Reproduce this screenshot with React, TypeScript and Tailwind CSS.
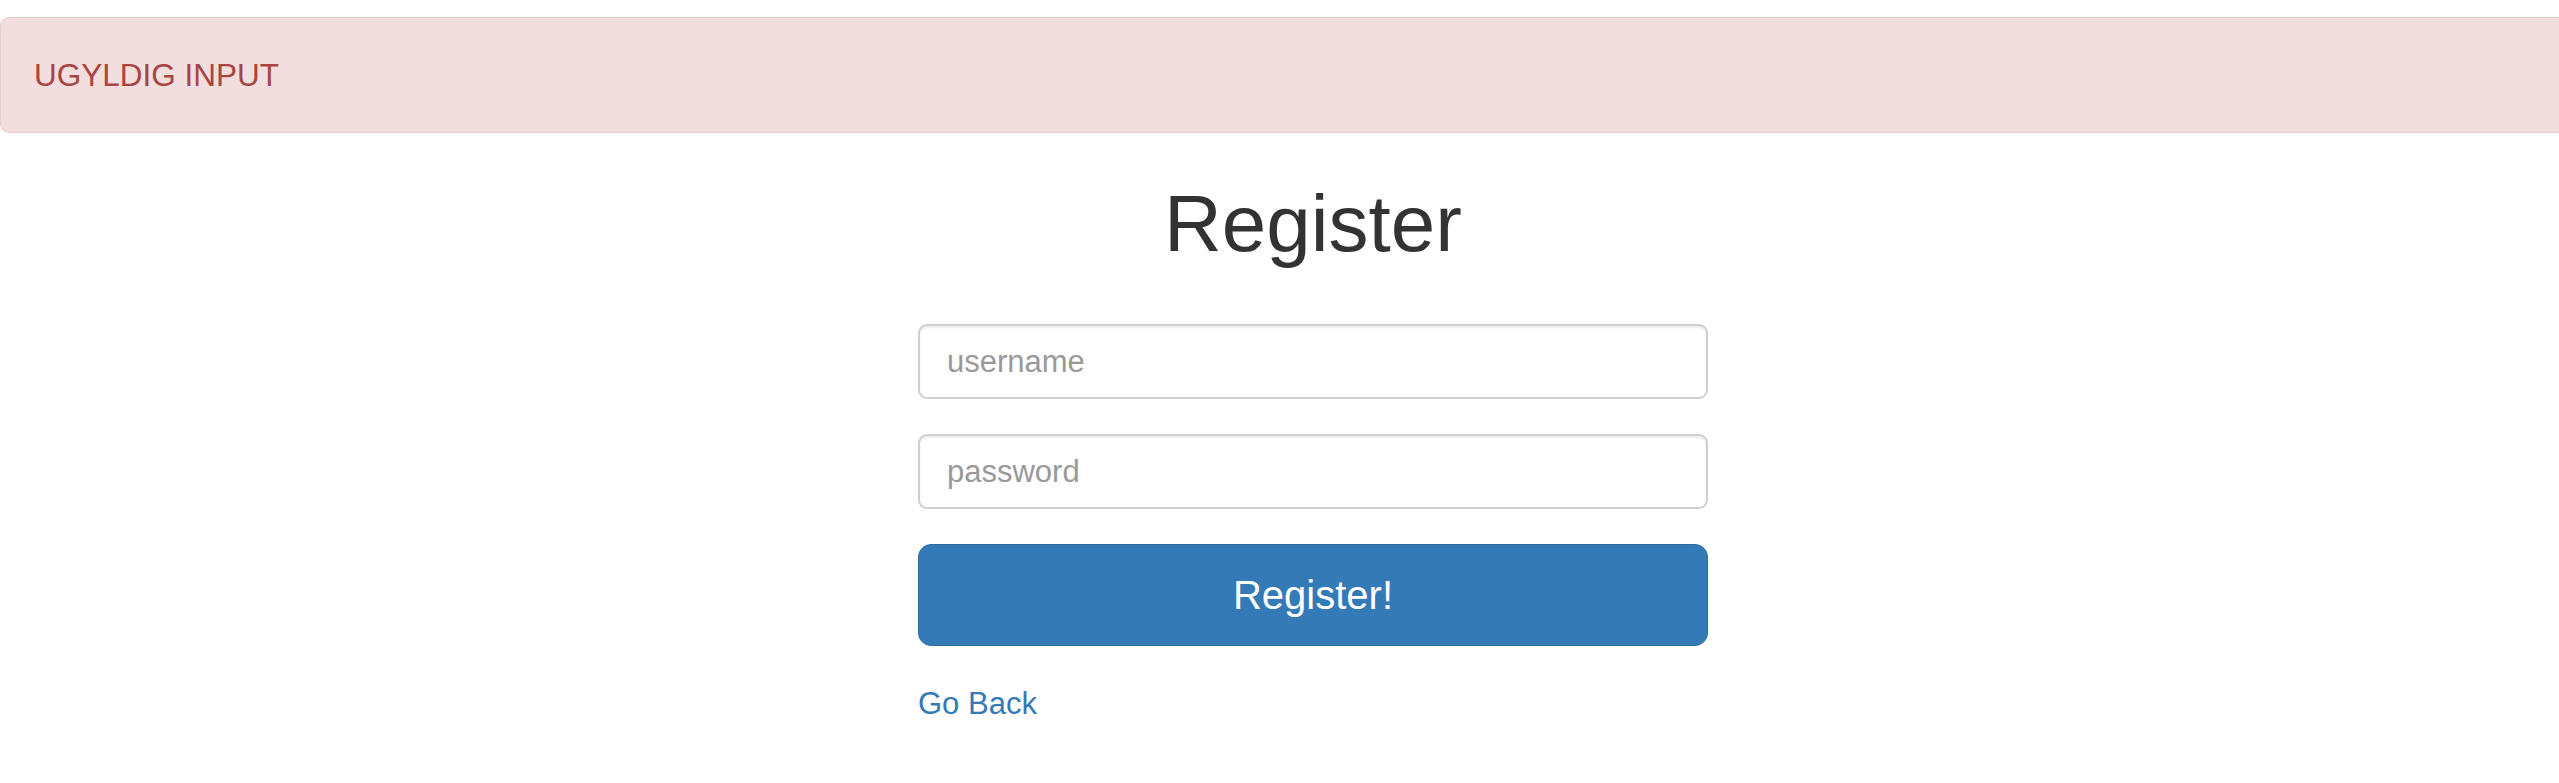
export default function App() {
  return (
    <div className="min-h-screen overflow-x-hidden bg-white pt-[17px] font-['Liberation_Sans',Arial,sans-serif] text-[#333]">
      <div className="rounded-l-[9px] border border-r-0 border-[#ebccd1] bg-[#f2dede] px-[33px] py-[35px] text-[31.5px] leading-[44px] text-[#a94442]">
        UGYLDIG INPUT
      </div>
      <div className="flex justify-center pl-[67px]">
        <div className="flex w-[790px] flex-col">
          <h1 className="mt-[47px] text-center text-[80px] font-normal leading-[88px] text-[#333]">
            Register
          </h1>
          <form className="mt-[56px] flex flex-col gap-[35px]">
            <input
              type="text"
              placeholder="username"
              className="h-[75px] w-full rounded-[9px] border-2 border-[#cfcfcf] bg-white px-[27px] text-[31px] text-[#555] shadow-[inset_0_2px_2px_rgba(0,0,0,0.075)] outline-none placeholder:text-[#999]"
            />
            <input
              type="password"
              placeholder="password"
              className="h-[75px] w-full rounded-[9px] border-2 border-[#cfcfcf] bg-white px-[27px] text-[31px] text-[#555] shadow-[inset_0_2px_2px_rgba(0,0,0,0.075)] outline-none placeholder:text-[#999]"
            />
            <button
              type="button"
              className="flex h-[102px] w-full items-center justify-center rounded-[13px] border border-[#2e6da4] bg-[#337ab7] text-[40px] text-white"
            >
              Register!
            </button>
          </form>
          <a href="#" className="mt-[36px] self-start text-[31px] leading-[44px] text-[#337ab7]">
            Go Back
          </a>
        </div>
      </div>
    </div>
  );
}
